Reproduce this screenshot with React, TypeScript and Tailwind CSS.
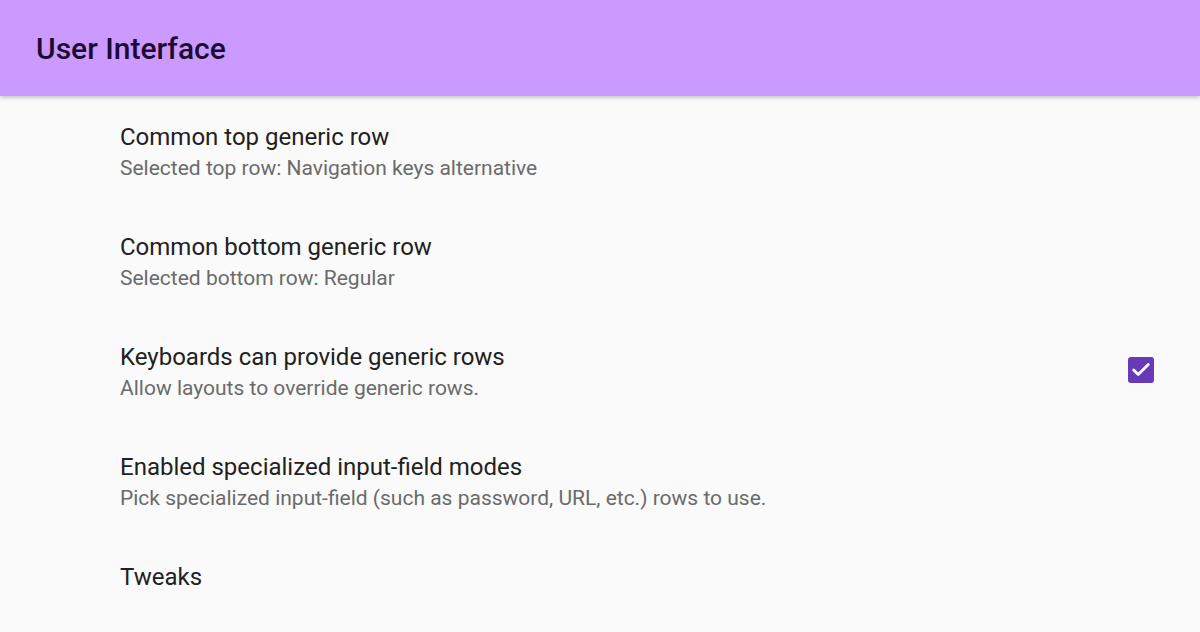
import { Check } from "lucide-react";

type Pref = {
  title: string;
  summary?: string;
  checked?: boolean;
};

const prefs: Pref[] = [
  { title: "Common top generic row", summary: "Selected top row: Navigation keys alternative" },
  { title: "Common bottom generic row", summary: "Selected bottom row: Regular" },
  { title: "Keyboards can provide generic rows", summary: "Allow layouts to override generic rows.", checked: true },
  {
    title: "Enabled specialized input-field modes",
    summary: "Pick specialized input-field (such as password, URL, etc.) rows to use.",
  },
  { title: "Tweaks" },
];

function PrefRow({ pref }: { pref: Pref }) {
  return (
    <div className="flex h-[110px] items-start pl-[120px] pr-[46px] pt-[25px]">
      <div className="flex-1">
        <div className="text-[24px] leading-[30px] text-[#212121]">{pref.title}</div>
        {pref.summary && (
          <div className="text-[21px] leading-[32px] text-[#6b6b6b]">{pref.summary}</div>
        )}
      </div>
      {pref.checked !== undefined && (
        <div className="mt-[15px] grid size-[26px] place-items-center rounded-[3px] bg-[#673ab7]">
          <Check className="size-[22px] text-white" strokeWidth={3} />
        </div>
      )}
    </div>
  );
}

export default function App() {
  return (
    <div className="h-[632px] w-[1200px] overflow-hidden bg-[#fafafa] font-['Roboto',sans-serif]">
      <header className="relative z-10 flex h-[96px] items-center bg-[#cb9afe] pl-9 shadow-[0_2px_4px_rgba(0,0,0,0.2)]">
        <h1 className="text-[30px] font-medium text-[#1d0a33]">User Interface</h1>
      </header>
      <main className="flex flex-col pt-[1px]">
        {prefs.map((p) => (
          <PrefRow key={p.title} pref={p} />
        ))}
      </main>
    </div>
  );
}
